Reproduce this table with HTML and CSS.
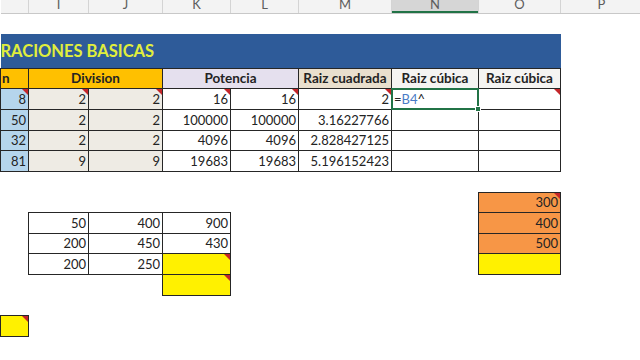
FILE: index.html
```html
<!DOCTYPE html>
<html lang="es">
<head>
<meta charset="utf-8">
<title>Operaciones básicas</title>
<link rel="stylesheet" href="styles.css">
</head>
<body>
<table class="sheet">
  <colgroup>
    <col class="c-h"><col class="c-i"><col class="c-j"><col class="c-k"><col class="c-l"><col class="c-m"><col class="c-n"><col class="c-o"><col class="c-p">
  </colgroup>
  <tr class="r13">
    <td class="lt"></td><td class="lt"><div>I</div></td><td class="lt"><div>J</div></td><td class="lt"><div>K</div></td><td class="lt"><div>L</div></td><td class="lt"><div>M</div></td><td class="lt lt-on"><div>N</div></td><td class="lt"><div>O</div></td><td class="lt"><div>P</div></td>
  </tr>
  <tr class="r21"><td colspan="9"></td></tr>
  <tr class="r34"><td colspan="8" class="title">RACIONES BASICAS</td><td></td></tr>
  <tr class="r20 head">
    <td class="b orange left">n</td>
    <td class="b orange" colspan="2">Division</td>
    <td class="b lav" colspan="2">Potencia</td>
    <td class="b tan">Raiz cuadrada</td>
    <td class="b pale">Raiz cúbica</td>
    <td class="b pale">Raiz cúbica</td>
    <td></td>
  </tr>
  <tr class="r21">
    <td class="b blue tri">8</td><td class="b beige tri">2</td><td class="b beige tri">2</td><td class="b tri">16</td><td class="b tri">16</td><td class="b tri">2</td><td class="b sel"><span class="op">=</span><span class="ref">B4</span><span class="op">^</span></td><td class="b tri"></td><td></td>
  </tr>
  <tr class="r21">
    <td class="b blue">50</td><td class="b beige">2</td><td class="b beige">2</td><td class="b">100000</td><td class="b">100000</td><td class="b">3.16227766</td><td class="b"></td><td class="b"></td><td></td>
  </tr>
  <tr class="r20">
    <td class="b blue">32</td><td class="b beige">2</td><td class="b beige">2</td><td class="b">4096</td><td class="b">4096</td><td class="b">2.828427125</td><td class="b"></td><td class="b"></td><td></td>
  </tr>
  <tr class="r21">
    <td class="b blue">81</td><td class="b beige">9</td><td class="b beige">9</td><td class="b">19683</td><td class="b">19683</td><td class="b">5.196152423</td><td class="b"></td><td class="b"></td><td></td>
  </tr>
  <tr class="r21"><td colspan="9"></td></tr>
  <tr class="r20"><td colspan="7"></td><td class="b amber tri">300</td><td></td></tr>
  <tr class="r21">
    <td></td><td class="b">50</td><td class="b">400</td><td class="b">900</td><td colspan="3"></td><td class="b amber">400</td><td></td>
  </tr>
  <tr class="r20">
    <td></td><td class="b">200</td><td class="b">450</td><td class="b">430</td><td colspan="3"></td><td class="b amber">500</td><td></td>
  </tr>
  <tr class="r21">
    <td></td><td class="b">200</td><td class="b">250</td><td class="b yellow tri"></td><td colspan="3"></td><td class="b yellow"></td><td></td>
  </tr>
  <tr class="r21"><td colspan="3"></td><td class="b yellow tri"></td><td colspan="5"></td></tr>
  <tr class="r20"><td colspan="9"></td></tr>
  <tr class="r21"><td class="b yellow tri"></td><td colspan="8"></td></tr>
  <tr class="r21"><td colspan="9"></td></tr>
</table>
</body>
</html>
```
FILE: styles.css
```css
html, body {
  margin: 0;
  padding: 0;
  background: #ffffff;
  overflow: hidden;
}

.sheet {
  border-collapse: collapse;
  table-layout: fixed;
  width: 642px;
  font-family: Lato, "Open Sans", sans-serif;
  font-size: 13px;
  color: #232323;
}

.c-h { width: 28px; }
.c-i { width: 60px; }
.c-j { width: 74px; }
.c-k { width: 68px; }
.c-l { width: 68px; }
.c-m { width: 93px; }
.c-n { width: 87px; }
.c-o { width: 82px; }
.c-p { width: 82px; }

.r13 { height: 13px; }
.r20 { height: 20px; }
.r21 { height: 21px; }
.r34 { height: 34px; }

td {
  padding: 0 2px 0 0;
  text-align: right;
  vertical-align: middle;
  white-space: nowrap;
  position: relative;
  line-height: 16px;
}

/* column letters */
.lt {
  padding: 0;
  background: #f3f3f3;
  border-right: 1px solid #d4d4d4;
  border-bottom: 1px solid #c8c8c8;
  color: #5d5d5d;
  text-align: center;
  vertical-align: top;
}
.lt div {
  height: 12px;
  line-height: 9px;
  font-size: 13px;
}
.lt-on {
  background: #d6d6d6;
  box-shadow: inset 0 -2px 0 #217346;
}

.title {
  background: #2e5b99;
  color: #e0ee3c;
  font-size: 16.5px;
  font-weight: 700;
  text-align: left;
  padding: 0;
  overflow: hidden;
}

.b { border: 1px solid #262626; }

.head td {
  font-weight: 700;
  font-size: 13.5px;
  text-align: center;
  padding: 0;
}
.head td.left { text-align: left; padding-left: 1px; }

.orange { background: #ffc000; }
.lav { background: #e5e0ee; }
.tan { background: #e9dfcd; }
.pale { background: #f5f4f2; }
.blue { background: #b5d5ec; }
.beige { background: #eeebe4; }
.amber { background: #f79646; }
.yellow { background: #fff100; }

.tri::after {
  content: "";
  position: absolute;
  top: 0;
  right: 0;
  border-top: 6px solid #c4262a;
  border-left: 6px solid transparent;
}

.sel {
  text-align: left;
  padding-left: 2px;
}
.sel::before {
  content: "";
  position: absolute;
  left: -1px;
  top: -1px;
  right: -1px;
  bottom: -1px;
  border: 2px solid #217346;
}
.sel::after {
  content: "";
  position: absolute;
  right: -3px;
  bottom: -3px;
  width: 4px;
  height: 4px;
  background: #217346;
  border: 1px solid #ffffff;
}
.op { color: #232323; }
.ref { color: #4a7bc6; }
```
